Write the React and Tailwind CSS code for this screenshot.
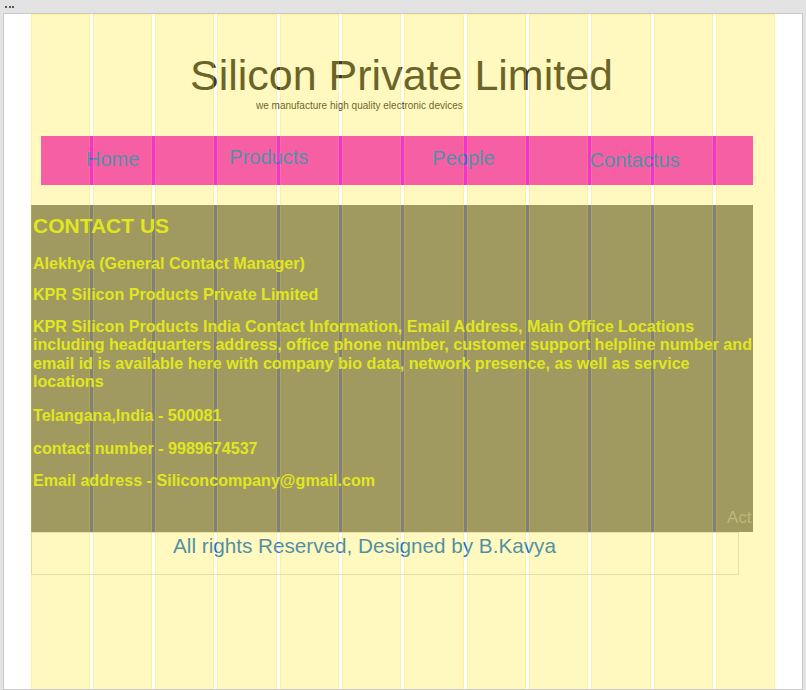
export default function App() {
  const cols = Array.from({ length: 12 }, (_, i) => i)

  return (
    <div className="h-[690px] overflow-hidden bg-[#e3e3e3] font-['Liberation_Sans',Arial,sans-serif]">
      {/* window strip */}
      <div className="flex h-[13px] items-center gap-[1.5px] pl-[5px]">
        <span className="h-[2px] w-[2px] bg-[#555]" />
        <span className="h-[2px] w-[2px] bg-[#555]" />
        <span className="h-[2px] w-[2px] bg-[#555]" />
      </div>

      <div className="relative mx-[3px] h-[677px] overflow-hidden border border-[#c9c9c9] bg-white">
        {/* header */}
        <h1 className="mt-[37px] pr-[3px] text-center text-[43px] leading-[48px] font-normal text-[#383838]">
          Silicon Private Limited
        </h1>
        <p className="mt-[0.5px] pl-[252px] text-[10px] leading-[12px] text-[#3a3a3a]">
          we manufacture high quality electronic devices
        </p>

        {/* nav */}
        <nav className="mt-[24.5px] ml-[37px] flex h-[49px] w-[712px] bg-[#f432dc] text-[20px] leading-[23px] text-[#1473dc]">
          <a className="ml-[45px] pt-[12px]">Home</a>
          <a className="ml-[90px] pt-[10px]">Products</a>
          <a className="ml-[124px] pt-[11px]">People</a>
          <a className="ml-[95px] pt-[13px]">Contactus</a>
        </nav>

        {/* contact */}
        <section className="relative mt-[20px] ml-[27px] h-[327px] w-[722px] overflow-hidden bg-[#808080] pt-[9.3px] pl-[2px] font-bold text-[#d8e62a]">
          <h2 className="text-[21px] leading-[24px]">CONTACT US</h2>
          <div className="text-[16.1px] leading-[18.4px]">
            <p className="mt-[15.3px]">Alekhya (General Contact Manager)</p>
            <p className="mt-[13.3px]">KPR Silicon Products Private Limited</p>
            <p className="mt-[13.3px] whitespace-nowrap">
              KPR Silicon Products India Contact Information, Email Address, Main Office Locations<br />
              including headquarters address, office phone number, customer support helpline number and<br />
              email id is available here with company bio data, network presence, as well as service<br />
              locations
            </p>
            <p className="mt-[15.4px]">Telangana,India - 500081</p>
            <p className="mt-[14.2px]">contact number - 9989674537</p>
            <p className="mt-[14px]">Email address - Siliconcompany@gmail.com</p>
          </div>
          <div className="absolute left-[696px] top-[302px] text-[17px] leading-[22px] font-normal text-[rgba(255,255,255,0.32)]">
            Act
          </div>
        </section>

        {/* footer */}
        <footer className="ml-[27px] h-[43px] w-[708px] border border-[#dedede] pt-[1px] pl-[141px] text-[20.7px] leading-[24px] text-[#1473dc]">
          All rights Reserved, Designed by B.Kavya
        </footer>

        {/* grid overlay */}
        <div className="pointer-events-none absolute top-0 bottom-0 left-[26.5px] grid w-[745px] grid-cols-12 gap-x-[3px]">
          {cols.map(c => (
            <div key={c} className="border-x border-t border-[rgba(255,210,0,0.2)] bg-[rgba(255,230,0,0.25)]" />
          ))}
        </div>
      </div>
    </div>
  )
}
